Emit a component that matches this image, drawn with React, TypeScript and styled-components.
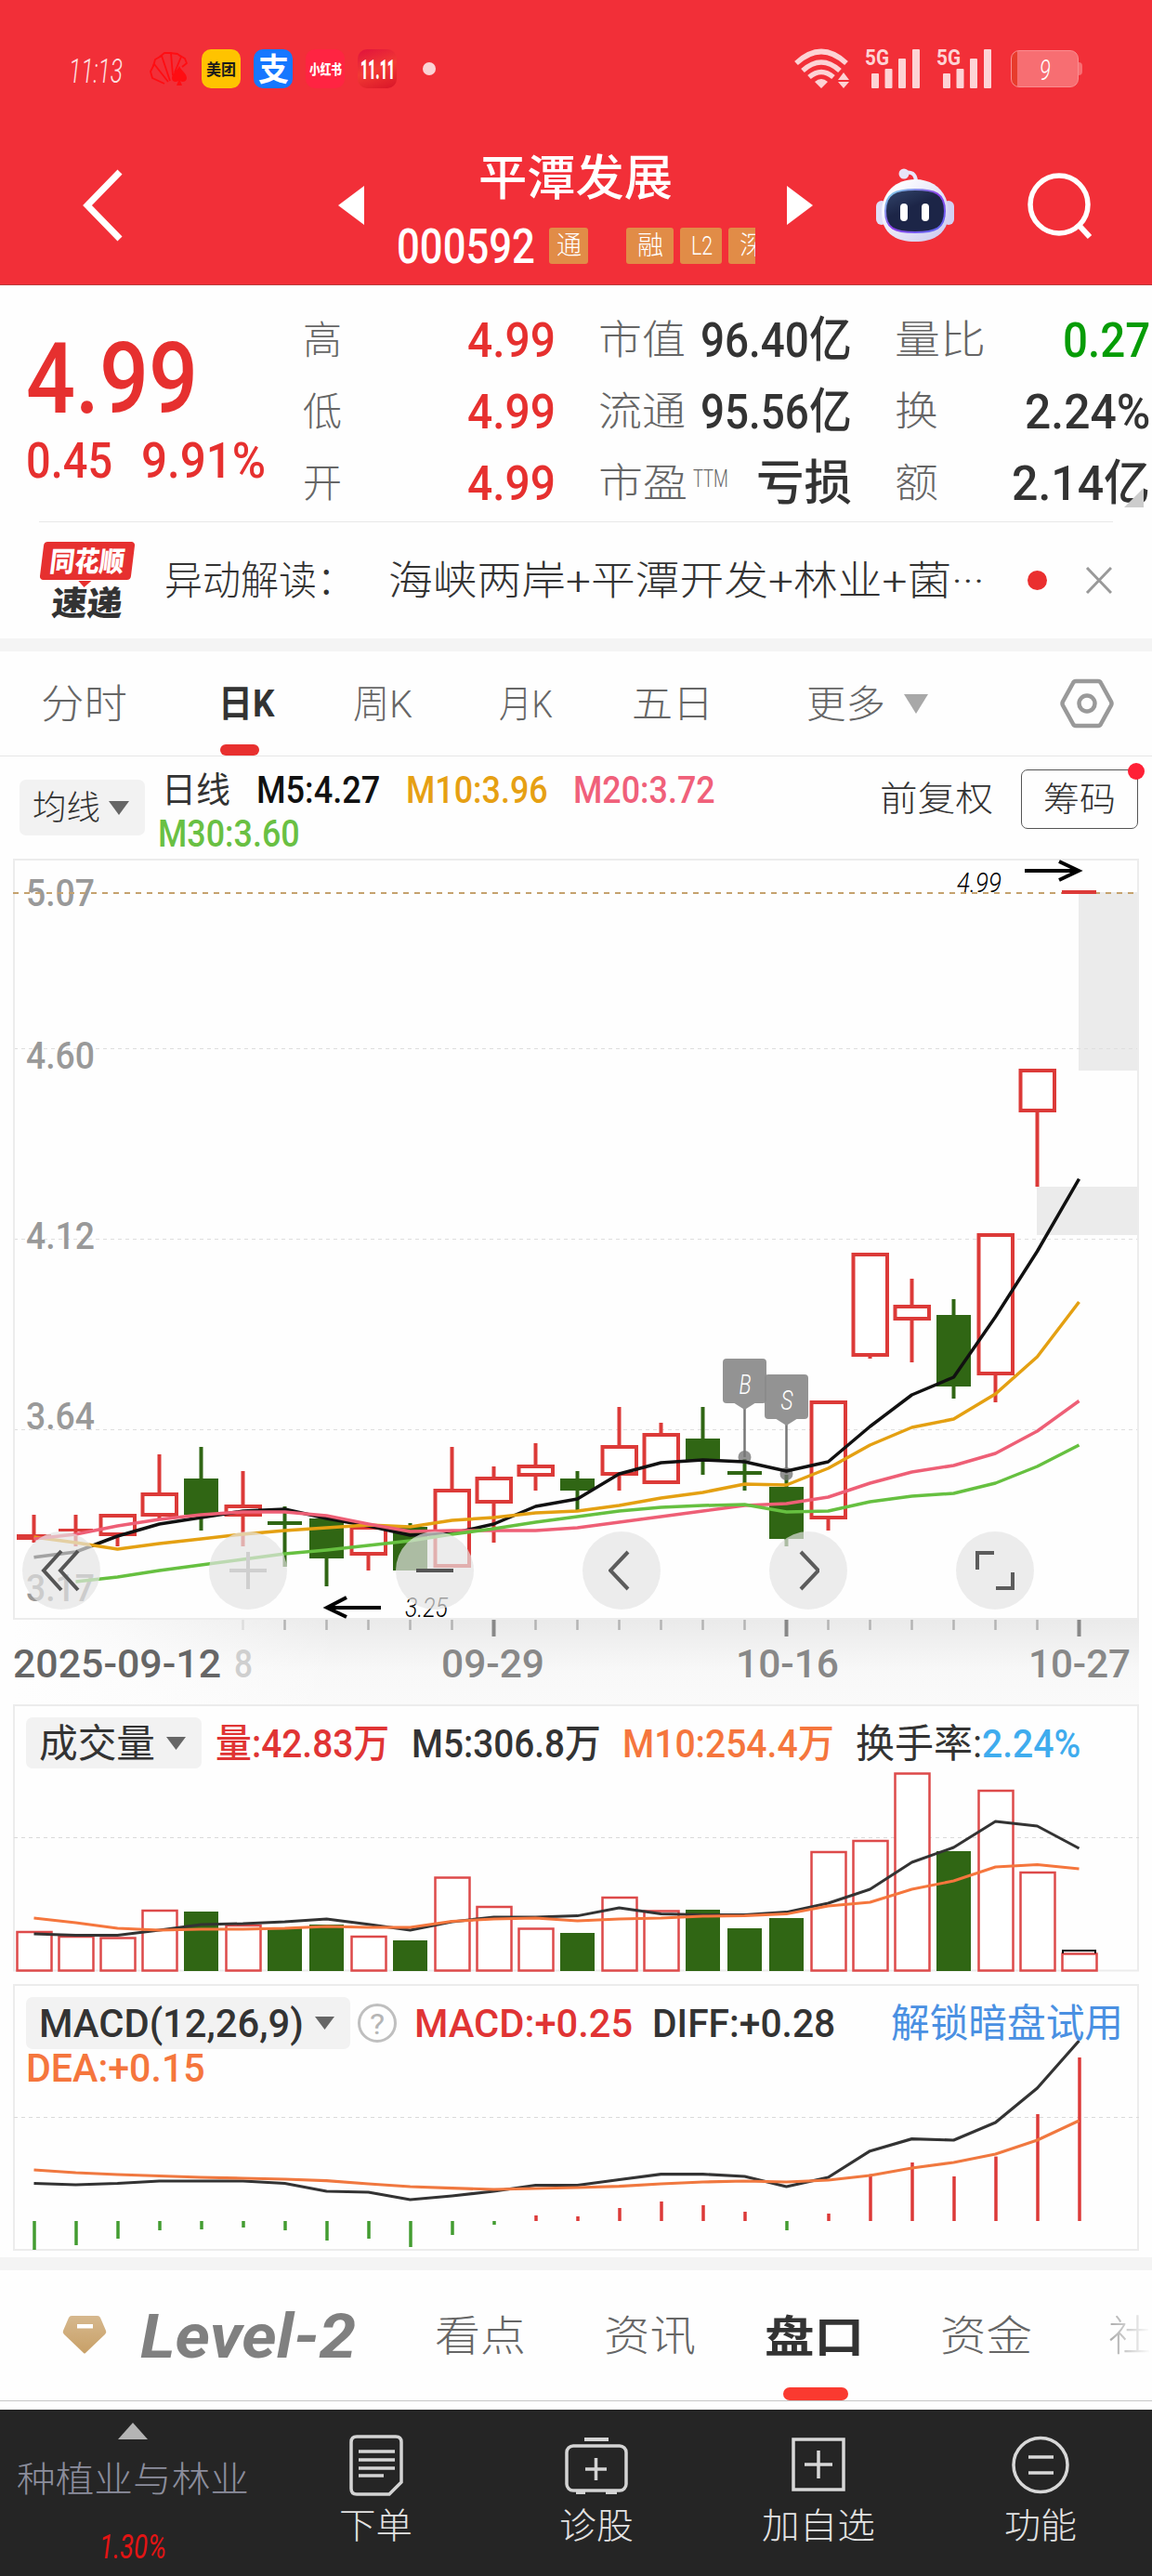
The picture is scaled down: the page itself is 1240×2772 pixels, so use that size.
import React, { useLayoutEffect, useRef, useState } from "react";
import styled, { createGlobalStyle } from "styled-components";

const FONT = `Roboto, "Noto Sans CJK SC", sans-serif`;
const RED = "#e6302f";
const INK = "#333333";
const UP = "#dc3a38";
const DOWN = "#306614";

const Global = createGlobalStyle`
  html, body { margin: 0; padding: 0; background: #fefefe; }
  * { box-sizing: border-box; }
  svg { display: block; flex: none; }
`;

/* ---------- text fitted to a given width ---------- */

const FitBox = styled.span<{ $w: number; $size: number; $color?: string; $weight?: number; $ml?: number; $italic?: boolean; $dy?: number }>`
  display: block;
  flex: none;
  width: ${(p) => p.$w}px;
  height: ${(p) => p.$size}px;
  margin-left: ${(p) => p.$ml ?? 0}px;
  margin-top: ${(p) => p.$dy ?? 0}px;
  font-family: ${FONT};
  font-size: ${(p) => p.$size}px;
  line-height: 1;
  font-weight: ${(p) => p.$weight ?? 500};
  font-style: ${(p) => (p.$italic ? "italic" : "normal")};
  color: ${(p) => p.$color ?? INK};
`;
const FitInner = styled.span`
  display: inline-block;
  white-space: pre;
  transform-origin: 0 50%;
`;

type FitProps = { w: number; size: number; color?: string; weight?: number; ml?: number; italic?: boolean; dy?: number; children: React.ReactNode };
function Fit({ w, size, color, weight, ml, italic, dy, children }: FitProps) {
  const ref = useRef<HTMLSpanElement>(null);
  const [scale, setScale] = useState(1);
  useLayoutEffect(() => {
    if (ref.current && ref.current.offsetWidth) setScale(w / ref.current.offsetWidth);
  }, [w, size]);
  return (
    <FitBox $w={w} $size={size} $color={color} $weight={weight} $ml={ml} $italic={italic} $dy={dy}>
      <FitInner ref={ref} style={{ transform: `translateY(1px) scaleX(${scale})` }}>
        {children}
      </FitInner>
    </FitBox>
  );
}

/* ---------- layout ---------- */

const Page = styled.div`
  width: 1240px;
  height: 2772px;
  display: flex;
  flex-direction: column;
  overflow: hidden;
  background: #fefefe;
  font-family: ${FONT};
`;
const Header = styled.header`
  height: 307px;
  background: #f22f38;
  border-bottom: 1px solid #b93a3c;
`;
const StatusBar = styled.div`
  height: 148px;
  padding: 0 76px;
  display: flex;
  align-items: center;
`;
const AppIcon = styled.span<{ $bg: string }>`
  flex: none;
  width: 42px;
  height: 42px;
  margin-left: 14px;
  border-radius: 10px;
  background: ${(p) => p.$bg};
  display: flex;
  align-items: center;
  justify-content: center;
  overflow: hidden;
`;
const StatusDot = styled.span`
  width: 14px;
  height: 14px;
  margin-left: 28px;
  border-radius: 50%;
  background: #fbd3d5;
`;
const StatusRight = styled.div`
  display: flex;
  align-items: center;
  margin-left: auto;
`;
const Battery = styled.span`
  flex: none;
  width: 73px;
  height: 40px;
  margin-left: 20px;
  border: 1px solid #fa8d90;
  border-radius: 9px;
  background: linear-gradient(90deg, #e73c2c 6px, #f76e72 6px);
  display: flex;
  align-items: center;
  justify-content: center;
`;
const BatteryNub = styled.span`
  width: 4px;
  height: 14px;
  margin-right: -1px;
  border-radius: 0 4px 4px 0;
  background: #f76e72;
`;
const NavBar = styled.div`
  height: 146px;
  display: flex;
  align-items: center;
  padding-left: 88px;
`;
const NavSpace = styled.span<{ $w: number }>`
  flex: none;
  width: ${(p) => p.$w}px;
`;
const TitleStack = styled.div`
  width: 455px;
  height: 146px;
  padding-top: 18px;
  display: flex;
  flex-direction: column;
  align-items: center;
`;
const CodeRow = styled.div`
  width: 386px;
  height: 62px;
  margin: 16px 0 0;
  display: flex;
  align-items: center;
  overflow: hidden;
`;
const Tag = styled.span<{ $w: number; $ml: number }>`
  flex: none;
  width: ${(p) => p.$w}px;
  height: 39px;
  margin-left: ${(p) => p.$ml}px;
  padding-left: 2px;
  border-radius: 3px;
  background: #e18c47;
  display: flex;
  align-items: center;
  justify-content: center;
`;

const Quote = styled.section`
  height: 254px;
  display: flex;
  position: relative;
`;
const PriceBlock = styled.div`
  width: 328px;
  padding: 47px 0 0 28px;
`;
const ChangeRow = styled.div`
  display: flex;
  margin-top: 9px;
`;
const StatColumn = styled.div<{ $w: number; $ml?: number }>`
  width: ${(p) => p.$w}px;
  margin-left: ${(p) => p.$ml ?? 0}px;
  padding-top: 20px;
`;
const StatRow = styled.div`
  height: 77px;
  display: flex;
  align-items: center;
  justify-content: space-between;
`;
const StatLabel = styled.span`
  display: flex;
  align-items: flex-start;
`;
const Corner = styled.i`
  position: absolute;
  right: 9px;
  top: 218px;
  width: 21px;
  height: 21px;
  background: #cccccc;
  clip-path: polygon(100% 0, 100% 100%, 0 100%);
`;
const News = styled.section`
  height: 126px;
  margin: 0 42px;
  border-top: 1px solid #e9e9e9;
  display: flex;
  align-items: center;
`;
const NewsLogo = styled.div`
  width: 104px;
  height: 84px;
  display: flex;
  flex-direction: column;
  align-items: center;
`;
const LogoBubble = styled.div`
  position: relative;
  width: 98px;
  height: 43px;
  border-radius: 4px;
  background: #e6302f;
  transform: skewX(-7deg);
  display: flex;
  align-items: center;
  justify-content: center;
  &::after {
    content: "";
    position: absolute;
    left: 42px;
    top: 42px;
    border: 7px solid transparent;
    border-top-color: #e6302f;
  }
`;
const LogoCaption = styled.div`
  margin-top: 7px;
  transform: skewX(-5deg);
`;
const NewsDot = styled.span`
  width: 21px;
  height: 21px;
  margin-left: 46px;
  border-radius: 50%;
  background: #ea2f2f;
`;
const Band = styled.div`
  flex: none;
  height: 14px;
  background: #f4f4f4;
`;
const PeriodTabs = styled.nav`
  height: 113px;
  border-bottom: 1px solid #e6e6e6;
  display: flex;
  align-items: stretch;
`;
const Tab = styled.div<{ $ml: number }>`
  position: relative;
  display: flex;
  align-items: center;
  margin-left: ${(p) => p.$ml}px;
`;
const TabMark = styled.i<{ $w: number; $h: number; $left: number; $color: string }>`
  position: absolute;
  bottom: 0;
  left: ${(p) => p.$left}px;
  width: ${(p) => p.$w}px;
  height: ${(p) => p.$h}px;
  border-radius: ${(p) => p.$h / 2}px;
  background: ${(p) => p.$color};
`;
const Legend = styled.section`
  height: 110px;
  padding-left: 21px;
  display: flex;
  align-items: flex-start;
`;
const Picker = styled.span<{ $w: number; $h: number; $mt?: number }>`
  flex: none;
  width: ${(p) => p.$w}px;
  height: ${(p) => p.$h}px;
  margin-top: ${(p) => p.$mt ?? 0}px;
  padding: 0 17px 0 14px;
  border-radius: 7px;
  background: #f2f2f2;
  display: flex;
  align-items: center;
  justify-content: space-between;
`;
const LegendLines = styled.div`
  width: 791px;
  padding: 12px 0 0 16px;
`;
const LegendLine = styled.div<{ $h: number }>`
  height: ${(p) => p.$h}px;
  display: flex;
  align-items: center;
`;
const ChipButton = styled.span`
  position: relative;
  flex: none;
  width: 126px;
  height: 64px;
  margin: 14px 0 0 30px;
  border: 1px solid #555;
  border-radius: 7px;
  display: flex;
  align-items: center;
  justify-content: center;
  &::after {
    content: "";
    position: absolute;
    right: -8px;
    top: -8px;
    width: 18px;
    height: 18px;
    border-radius: 50%;
    background: #ff2036;
  }
`;
const KPanel = styled.section`
  position: relative;
  height: 910px;
`;
const ChartSvg = styled.svg`
  font-family: ${FONT};
`;
const Controls = styled.div`
  position: absolute;
  left: 24px;
  top: 724px;
  display: flex;
  gap: 117px;
`;
const RoundButton = styled.button`
  width: 84px;
  height: 84px;
  padding: 0;
  border: 0;
  border-radius: 50%;
  background: rgba(228, 228, 228, 0.69);
  display: flex;
  align-items: center;
  justify-content: center;
`;
const SubPanel = styled.section<{ $h: number; $mb: number }>`
  position: relative;
  flex: none;
  height: ${(p) => p.$h}px;
  margin-bottom: ${(p) => p.$mb}px;
`;
const PanelHead = styled.div`
  position: absolute;
  left: 28px;
  top: 14px;
  right: 0;
  height: 55px;
  display: flex;
  align-items: center;
`;
const PanelSecondLine = styled.div`
  position: absolute;
  left: 28px;
  top: 69px;
`;
const Help = styled.span`
  width: 42px;
  height: 42px;
  margin-left: 8px;
  border: 3px solid #bfbfbf;
  border-radius: 50%;
  display: flex;
  align-items: center;
  justify-content: center;
`;
const DetailTabs = styled.nav`
  height: 141px;
  flex: none;
  border-bottom: 1px solid #c6c6c6;
  margin-bottom: 9px;
  display: flex;
  padding-left: 58px;
  overflow: hidden;
`;
const Faded = styled.div`
  display: flex;
  align-items: center;
  margin-left: 82px;
  -webkit-mask-image: linear-gradient(90deg, #000, transparent);
  mask-image: linear-gradient(90deg, #000, transparent);
`;
const Footer = styled.footer`
  height: 179px;
  background: #252525;
  display: flex;
`;
const Sector = styled.div`
  width: 286px;
  display: flex;
  flex-direction: column;
  align-items: center;
  padding-top: 14px;
`;
const Action = styled.div<{ $w: number }>`
  width: ${(p) => p.$w}px;
  padding-top: 27px;
  display: flex;
  flex-direction: column;
  align-items: center;
  gap: 12px;
`;

/* ---------- icons ---------- */

const Caret = ({ w = 22, h = 15, color = "#666", ml = 0 }: { w?: number; h?: number; color?: string; ml?: number }) => (
  <svg width={w + ml} height={h} viewBox={`${-ml} 0 ${w + ml} ${h}`}>
    <path d={`M0 0H${w}L${w / 2} ${h}Z`} fill={color} />
  </svg>
);

const FanLogo = () => (
  <svg width="42" height="36" viewBox="0 0 42 36">
    <g fill="none" stroke="#ff0d12" strokeWidth="1.8" strokeLinejoin="round">
      <path d="M16 34L3 28 1 21 5 13 20 32" />
      <path d="M4 15L6 8 13 4 22 31" />
      <path d="M11 5L16 1 23 1 25 25" />
      <path d="M22 1L30 2 34 5 27 22" />
      <path d="M33 4L38 7 40 12 35 16" />
    </g>
    <path d="M32 15c2 5 8 8 8 13 0 4-5 5-7 3l2 5h-6l2-5c-3 2-7 1-7-3 0-5 6-8 8-13z" fill="#ff0d12" />
  </svg>
);

const Wifi = () => (
  <svg width="60" height="44" viewBox="0 0 60 44">
    <g fill="none" stroke="#fdd3d5" strokeWidth="5.5">
      <path d="M2 16Q29-9 56 16" />
      <path d="M9 24Q29 6 49 24" />
      <path d="M16 31Q29 20 42 31" />
    </g>
    <path d="M22 36Q29 30 36 36L29 43Z M53 26l6 8H47z M53 43l6-7H47z" fill="#fdd3d5" />
  </svg>
);

const Signal = ({ ml }: { ml: number }) => (
  <svg width={60 + ml} height="56" viewBox={`${-ml} -6 ${60 + ml} 56`}>
    <text x="0" y="18" fontFamily="Roboto, sans-serif" fontSize="24" fontWeight="700" fill="#fdd3d5" textLength="26" lengthAdjust="spacingAndGlyphs">
      5G
    </text>
    <g fill="#fdd3d5">
      <rect x="7" y="27" width="8" height="16" rx="1" />
      <rect x="21.500" y="22" width="8" height="21" rx="1" />
      <rect x="36" y="11" width="8" height="32" rx="1" />
      <rect x="51" y="1" width="8" height="42" rx="1" />
    </g>
  </svg>
);

const Robot = () => (
  <svg width="86" height="82" viewBox="0 0 86 82">
    <defs>
      <linearGradient id="shell" x1="0" y1="0" x2="1" y2="1">
        <stop offset="0.2" stopColor="#fbfbff" />
        <stop offset="1" stopColor="#c9c6ee" />
      </linearGradient>
      <linearGradient id="rim" x1="0" y1="0" x2="1" y2="1">
        <stop offset="0" stopColor="#7fe3ea" />
        <stop offset="0.5" stopColor="#8b3fe8" />
        <stop offset="1" stopColor="#5a6df2" />
      </linearGradient>
      <linearGradient id="visor" x1="0" y1="0" x2="0.6" y2="1">
        <stop offset="0" stopColor="#34466c" />
        <stop offset="0.5" stopColor="#1c2547" />
      </linearGradient>
    </defs>
    <path d="M31 6Q43 3 44 15" fill="none" stroke="#e9e6fa" strokeWidth="4" />
    <circle cx="31" cy="7" r="5.500" fill="#e8e4f8" />
    <rect x="1" y="36" width="12" height="26" rx="6" fill="#e0def6" />
    <rect x="73" y="36" width="12" height="26" rx="6" fill="#d3d0f2" />
    <path d="M43 13C64 13 79 27 79 49 79 70 65 80 43 80S7 70 7 49C7 27 22 13 43 13Z" fill="url(#shell)" />
    <path d="M43 24C64 24 75 28 75 47S65 70 43 70 11 66 11 47 22 24 43 24Z" fill="url(#visor)" stroke="url(#rim)" strokeWidth="2" />
    <rect x="27" y="39" width="8" height="19" rx="4" fill="#fff" />
    <rect x="50" y="39" width="8" height="19" rx="4" fill="#fff" />
  </svg>
);

/* ---------- chart data (26 sessions) ---------- */

const X0 = 36.5;
const STEP = 45;
const xAt = (i: number) => X0 + STEP * i;
const line = (ys: number[], from = 0) => ys.map((y, i) => `${xAt(i + from)},${y}`).join(" ");

type Candle = [up: 0 | 1, bodyTop: number, bodyBottom: number, high: number, low: number];
const candles: Candle[] = [
  [1, 1651, 1657, 1630, 1660], [1, 1645, 1648, 1630, 1664], [1, 1629, 1653, 1629, 1664], [1, 1606, 1632, 1565, 1634],
  [0, 1591, 1630, 1557, 1647], [1, 1619, 1632, 1583, 1664], [0, 1637, 1641, 1621, 1686], [0, 1634, 1677, 1634, 1707],
  [1, 1642, 1674, 1642, 1690], [0, 1643, 1690, 1639, 1690], [1, 1602, 1687, 1557, 1687], [1, 1589, 1618, 1578, 1660],
  [1, 1576, 1589, 1553, 1604], [0, 1591, 1604, 1583, 1626], [1, 1555, 1588, 1514, 1604], [1, 1542, 1597, 1531, 1597],
  [0, 1548, 1573, 1514, 1587], [0, 1583, 1587, 1570, 1604], [0, 1600, 1656, 1587, 1664], [1, 1507, 1635, 1507, 1647],
  [1, 1348, 1460, 1348, 1462], [1, 1404, 1421, 1376, 1466], [0, 1415, 1492, 1398, 1505], [1, 1327, 1480, 1327, 1509],
  [1, 1150, 1197, 1150, 1277], [1, 958, 962, 958, 962],
];
const ma5 = [1675.7, 1670, 1653, 1640, 1633, 1626, 1624, 1634, 1642, 1652, 1650, 1640, 1621, 1613, 1586, 1574, 1571, 1573, 1583, 1573, 1535, 1501, 1482, 1417, 1346.5, 1268.6];
const ma10 = [1654, 1660, 1667, 1661, 1656, 1651, 1647, 1644, 1641, 1643, 1636, 1633, 1628, 1626, 1620, 1612, 1606, 1597, 1598, 1580, 1555, 1536, 1527, 1500, 1460, 1401];
const ma20 = [1656, 1651, 1642, 1635, 1630, 1627, 1627, 1631, 1640, 1648, 1647, 1647, 1647, 1644, 1638, 1632, 1626, 1620, 1618, 1611, 1596, 1584, 1577, 1564, 1540, 1507.5];
const ma30 = [1702, 1697, 1690, 1684, 1678, 1672, 1668, 1663, 1658, 1651, 1645, 1638, 1632, 1626, 1622, 1620, 1619, 1627, 1626, 1616, 1610, 1607, 1596, 1578, 1555];

const volTop = [2079, 2084, 2085.5, 2056, 2057, 2072, 2075, 2071, 2084, 2088, 2020.5, 2052, 2075.5, 2080, 2042, 2056.5, 2055, 2075, 2064, 1993, 1981, 1908.500, 1992, 1927, 2015, 2102.500];
const volDown = [4, 6, 7, 9, 13, 16, 17, 18, 22];
const vol5 = [2081, 2082.5, 2082.5, 2077, 2071, 2070, 2068, 2065, 2070.7, 2077, 2068, 2063, 2063, 2061.6, 2053, 2059.6, 2060.4, 2060.4, 2057.6, 2048, 2033, 2004, 1988, 1960, 1965, 1989];
const vol10 = [2064, 2069, 2075, 2077, 2076, 2076, 2075, 2073, 2074, 2074, 2067.5, 2065, 2064, 2067, 2065, 2064, 2062, 2061.6, 2059.6, 2051, 2047, 2033, 2024, 2009, 2006.6, 2011];

const macdEnd = [2421, 2416, 2409, 2400, 2399, 2397, 2400, 2411, 2409, 2418, 2405, 2394, 2384, 2385, 2376, 2369, 2373, 2380, 2400, 2382, 2339.6, 2327, 2342, 2320.6, 2275, 2214];
const diff = [2349.5, 2351, 2349.5, 2347, 2347, 2347, 2349.5, 2358, 2359, 2367, 2363, 2358, 2351.5, 2351.5, 2345.5, 2339.6, 2339.6, 2342, 2353, 2343, 2314.7, 2301.6, 2303, 2284, 2247, 2196];
const dea = [2335, 2338, 2340, 2341.5, 2343, 2344, 2345, 2346.7, 2350, 2353, 2354.6, 2356, 2355, 2354, 2352.6, 2350, 2348, 2347, 2348, 2346, 2341, 2333, 2327, 2318, 2303, 2282];

const priceLabels: [string, number][] = [["5.07", 975], ["4.60", 1150], ["4.12", 1344], ["3.64", 1538], ["3.17", 1723]];
const dateLabels: [string, number, number, string][] = [
  ["2025-09-12", 14, 224, "#666"], ["8", 252, 20, "#cfcfcf"], ["09-29", 475, 111, "#888"], ["10-16", 792, 111, "#888"], ["10-27", 1107, 110, "#888"],
];

function CandleShape({ i, c }: { i: number; c: Candle }) {
  const [up, top, bottom, high, low] = c;
  const x = xAt(i);
  const solid = !up || bottom - top < 8;
  const color = up ? UP : DOWN;
  return (
    <g>
      {high < top && <path d={`M${x} ${high}V${top + 1}`} stroke={color} strokeWidth="4" />}
      {low > bottom && <path d={`M${x} ${bottom - 1}V${low}`} stroke={color} strokeWidth="4" />}
      {solid ? (
        <rect x={x - 18.5} y={top} width="37" height={bottom - top} fill={color} />
      ) : (
        <rect x={x - 18} y={top + 2} width="36.500" height={bottom - top - 4} fill="#fff" stroke={color} strokeWidth="4" />
      )}
    </g>
  );
}

const Flag = ({ x, y, end, label }: { x: number; y: number; end: number; label: string }) => (
  <g>
    <path d={`M${x} ${y + 50}V${end}`} stroke="#777" strokeWidth="2.500" />
    <circle cx={x} cy={end} r="7" fill="#777" fillOpacity="0.8" />
    <rect x={x - 23.5} y={y} width="47" height="48" rx="4" fill="#8a8a8a" fillOpacity="0.92" />
    <path d={`M${x - 11} ${y + 48}h22l-11 7z`} fill="#939393" />
    <text x={x - 6} y={y + 38} fontSize="30" fontWeight="300" fontStyle="italic" fill="#fff" textLength="13" lengthAdjust="spacingAndGlyphs">
      {label}
    </text>
  </g>
);

function KChart() {
  return (
    <ChartSvg width="1240" height="910" viewBox="0 924 1240 910">
      <defs>
        <linearGradient id="axisV" x1="0" y1="0" x2="0" y2="1">
          <stop offset="0" stopColor="#eaeaea" />
          <stop offset="0.6" stopColor="#f8f8f8" />
          <stop offset="1" stopColor="#fafafa" />
        </linearGradient>
        <linearGradient id="axisH" x1="0" y1="0" x2="1" y2="0">
          <stop offset="0" stopColor="#fefefe" />
          <stop offset="0.15" stopColor="#fefefe" stopOpacity="0.75" />
          <stop offset="0.5" stopColor="#fefefe" stopOpacity="0" />
        </linearGradient>
      </defs>
      <rect x="15" y="1743" width="1211" height="91" fill="url(#axisV)" />
      <rect x="15" y="1743" width="700" height="91" fill="url(#axisH)" />
      <path d="M1161 960h65v192h-65zM1116 1277h110v52h-110z" fill="#ebebeb" />
      <path d="M15 1128.500H1226M15 1333.500H1226M15 1538.500H1226" stroke="#dedede" strokeWidth="1" strokeDasharray="4 4" />
      <rect x="15" y="925" width="1210" height="817" fill="none" stroke="#ececec" strokeWidth="2" />
      {priceLabels.map(([t, y]) => (
        <text key={t} x="28" y={y} fontSize="41" fontWeight="500" fill="#999" textLength="74" lengthAdjust="spacingAndGlyphs">
          {t}
        </text>
      ))}
      <path d="M14 961H1226" stroke="#c5a26e" strokeWidth="2" strokeDasharray="6 6" />
      {candles.map((c, i) => (
        <CandleShape key={i} i={i} c={c} />
      ))}
      <Flag x={801.5} y={1462} end={1568} label="B" />
      <Flag x={846.5} y={1479} end={1586} label="S" />
      <g fill="none" strokeWidth="3.500" strokeLinejoin="round">
        <polyline points={line(ma5)} stroke="#111" />
        <polyline points={line(ma10)} stroke="#e4a012" />
        <polyline points={line(ma20)} stroke="#ee5f76" />
        <polyline points={line(ma30, 1)} stroke="#66c040" />
      </g>
      <g fill="none" stroke="#000" strokeWidth="4">
        <path d="M1103 937h58M1140 927l21 10-21 10" />
        <path d="M410 1730h-58M373 1719l-21 11 21 10" />
      </g>
      <text x="1030" y="960" fontSize="30" fontStyle="italic" fontWeight="300" fill="#000" textLength="48" lengthAdjust="spacingAndGlyphs">4.99</text>
      <text x="436" y="1740" fontSize="30" fontStyle="italic" fontWeight="300" fill="#000" textLength="46" lengthAdjust="spacingAndGlyphs">3.25</text>
      {Array.from({ length: 21 }, (_, k) => k + 5).map((i) => {
        const major = i === 11 || i === 18 || i === 25;
        return <path key={i} d={`M${xAt(i)} 1743v${major ? 18 : 11}`} stroke={major ? "#888" : i === 5 ? "#ddd" : "#b4b4b4"} strokeWidth={major ? 4 : 2.5} />;
      })}
      {dateLabels.map(([t, x, w, color]) => (
        <text key={t} x={x} y="1805" fontSize="42" fontWeight="500" fill={color} textLength={w} lengthAdjust="spacingAndGlyphs">
          {t}
        </text>
      ))}
    </ChartSvg>
  );
}

function VolumeChart() {
  return (
    <ChartSvg width="1240" height="288" viewBox="0 1834 1240 288">
      <rect x="15" y="1835" width="1210" height="285.500" fill="none" stroke="#ececec" strokeWidth="2" />
      <path d="M15 1977.500H1226" stroke="#dadada" strokeWidth="1" strokeDasharray="4 4" />
      {volTop.map((y, i) =>
        volDown.includes(i) ? (
          <rect key={i} x={xAt(i) - 18.5} y={y} width="37" height={2121 - y} fill={DOWN} />
        ) : (
          <rect key={i} x={xAt(i) - 18} y={y} width="37" height={2120.5 - y} fill="#fff" stroke="#dd4a4a" strokeWidth="2.500" />
        )
      )}
      <path d="M1144 2102v-3h35v3" fill="none" stroke="#000" strokeWidth="2" />
      <g fill="none" strokeWidth="3" strokeLinejoin="round">
        <polyline points={line(vol5)} stroke="#333" />
        <polyline points={line(vol10)} stroke="#f5763d" />
      </g>
    </ChartSvg>
  );
}

function MacdChart() {
  return (
    <ChartSvg width="1240" height="287" viewBox="0 2135 1240 287">
      <rect x="15" y="2136" width="1210" height="285" fill="none" stroke="#ececec" strokeWidth="2" />
      <path d="M15 2278.500H1226" stroke="#dadada" strokeWidth="1" strokeDasharray="4 4" />
      {macdEnd.map((y, i) => (
        <path key={i} d={`M${xAt(i) + 0.5} 2390V${y}`} stroke={y > 2390 ? "#439c31" : "#dc3a38"} strokeWidth="3.500" />
      ))}
      <g fill="none" strokeWidth="3.200" strokeLinejoin="round">
        <polyline points={line(diff)} stroke="#333" />
        <polyline points={line(dea)} stroke="#f0783f" />
      </g>
    </ChartSvg>
  );
}

/* ---------- page ---------- */

const GREY = "#666";

export default function App() {
  return (
    <Page>
      <Global />
      <Header>
        <StatusBar>
          <Fit w={58} size={36} weight={300} italic color="#fde0e1" dy={4} ml={-2}>11:13</Fit>
          <NavSpace $w={29} />
          <FanLogo />
          <AppIcon $bg="#ffc300"><Fit w={32} size={17} weight={700} color="#1b1b1b">美团</Fit></AppIcon>
          <AppIcon $bg="#1677ff"><Fit w={33} size={34} weight={700} color="#fff">支</Fit></AppIcon>
          <AppIcon $bg="#ff2442"><Fit w={35} size={15} weight={800} color="#fff">小红书</Fit></AppIcon>
          <AppIcon $bg="linear-gradient(160deg,#e0123c,#f23a34 50%,#d81428)"><Fit w={37} size={29} weight={900} color="#fff">11.11</Fit></AppIcon>
          <StatusDot />
          <StatusRight>
            <Wifi />
            <Signal ml={16} />
            <Signal ml={17} />
            <Battery><Fit w={12} size={31} weight={300} italic color="#fff">9</Fit></Battery>
            <BatteryNub />
          </StatusRight>
        </StatusBar>
        <NavBar>
          <svg width="44" height="78" viewBox="0 0 44 78"><path d="M41 3L6 39 41 75" fill="none" stroke="#fff" strokeWidth="7" /></svg>
          <NavSpace $w={232} />
          <svg width="28" height="42" viewBox="0 0 28 42"><path d="M28 0v42L0 21z" fill="#fff" /></svg>
          <TitleStack>
            <Fit w={209} size={52} color="#fff">平潭发展</Fit>
            <CodeRow>
              <Fit w={149} size={51} color="#fff">000592</Fit>
              <Tag $w={42} $ml={15}><Fit w={27} size={28} weight={300} color="#fff">通</Fit></Tag>
              <Tag $w={51} $ml={41}><Fit w={28} size={28} weight={300} color="#fff">融</Fit></Tag>
              <Tag $w={45} $ml={7}><Fit w={23} size={27} weight={300} color="#fff">L2</Fit></Tag>
              <Tag $w={51} $ml={7}><Fit w={28} size={28} weight={300} color="#fff">深</Fit></Tag>
            </CodeRow>
          </TitleStack>
          <svg width="28" height="42" viewBox="0 0 28 42"><path d="M0 0v42l28-21z" fill="#fff" /></svg>
          <NavSpace $w={67} />
          <Robot />
          <NavSpace $w={77} />
          <svg width="74" height="74" viewBox="0 0 74 74" fill="none" stroke="#fff"><circle cx="35" cy="36" r="31" strokeWidth="5.500" /><path d="M56 58l12 13" strokeWidth="6" /></svg>
        </NavBar>
      </Header>

      <Quote>
        <PriceBlock>
          <Fit w={185} size={106} color={RED}>4.99</Fit>
          <ChangeRow>
            <Fit w={93} size={53} color={RED}>0.45</Fit>
            <Fit w={134} size={53} color={RED} ml={31}>9.91%</Fit>
          </ChangeRow>
        </PriceBlock>
        <StatColumn $w={270}>
          {["高", "低", "开"].map((t) => (
            <StatRow key={t}>
              <Fit w={42} size={42} weight={300} color={GREY} ml={-2}>{t}</Fit>
              <Fit w={95} size={52} color={RED}>4.99</Fit>
            </StatRow>
          ))}
        </StatColumn>
        <StatColumn $w={273} $ml={46}>
          <StatRow><Fit w={94} size={43} weight={300} color={GREY}>市值</Fit><Fit w={163} size={52}>96.40亿</Fit></StatRow>
          <StatRow><Fit w={94} size={43} weight={300} color={GREY}>流通</Fit><Fit w={163} size={52}>95.56亿</Fit></StatRow>
          <StatRow>
            <StatLabel><Fit w={96} size={43} weight={300} color={GREY}>市盈</Fit><Fit w={38} size={25} weight={300} color={GREY} ml={6} dy={4}>TTM</Fit></StatLabel>
            <Fit w={103} size={52}>亏损</Fit>
          </StatRow>
        </StatColumn>
        <StatColumn $w={275} $ml={46}>
          <StatRow><Fit w={98} size={43} weight={300} color={GREY}>量比</Fit><Fit w={94} size={52} color="#069c06">0.27</Fit></StatRow>
          <StatRow><Fit w={47} size={43} weight={300} color={GREY}>换</Fit><Fit w={135} size={52}>2.24%</Fit></StatRow>
          <StatRow><Fit w={47} size={43} weight={300} color={GREY}>额</Fit><Fit w={149} size={52}>2.14亿</Fit></StatRow>
        </StatColumn>
        <Corner />
      </Quote>

      <News>
        <NewsLogo>
          <LogoBubble><Fit w={80} size={30} weight={900} color="#fff">同花顺</Fit></LogoBubble>
          <LogoCaption><Fit w={76} size={36} weight={900} color="#333">速递</Fit></LogoCaption>
        </NewsLogo>
        <Fit w={205} size={43} weight={300} ml={31} dy={0}>异动解读：</Fit>
        <Fit w={642} size={43} weight={300} ml={36} dy={0}>海峡两岸+平潭开发+林业+菌···</Fit>
        <NewsDot />
        <svg width="70" height="30" viewBox="-42 0 70 30"><path d="M1 1l26 27M27 1L1 28" stroke="#999" strokeWidth="3" /></svg>
      </News>
      <Band />

      <PeriodTabs>
        <Tab $ml={44}><Fit w={93} size={43} weight={300} color={GREY}>分时</Fit></Tab>
        <Tab $ml={98}>
          <Fit w={60} size={40} weight={700} color="#333">日K</Fit>
          <TabMark $w={42} $h={12} $left={2} $color="#e8302f" />
        </Tab>
        <Tab $ml={85}><Fit w={64} size={41} weight={300} color={GREY}>周K</Fit></Tab>
        <Tab $ml={93}><Fit w={58} size={41} weight={300} color={GREY}>月K</Fit></Tab>
        <Tab $ml={85}><Fit w={88} size={41} weight={300} color={GREY}>五日</Fit></Tab>
        <Tab $ml={100}><Fit w={85} size={41} weight={300} color={GREY}>更多</Fit><Caret w={26} h={21} color="#a8a8a8" ml={20} /></Tab>
        <Tab $ml={142}>
          <svg width="58" height="54" viewBox="0 0 58 54" fill="none" stroke="#999"><path d="M17 3h24q2 0 3 2l11 20q1 2 0 4L44 49q-1 2-3 2H17q-2 0-3-2L3 29q-1-2 0-4L14 5q1-2 3-2z" strokeWidth="4.500" /><circle cx="29" cy="27" r="8.500" strokeWidth="4.500" /></svg>
        </Tab>
      </PeriodTabs>

      <Legend>
        <Picker $w={135} $h={60} $mt={25}><Fit w={73} size={36} weight={300}>均线</Fit><Caret /></Picker>
        <LegendLines>
          <LegendLine $h={46}>
            <Fit w={74} size={38} ml={2} weight={400}>日线</Fit>
            <Fit w={133} size={41} ml={28} color="#111">M5:4.27</Fit>
            <Fit w={153} size={41} ml={28} color="#e6a013">M10:3.96</Fit>
            <Fit w={153} size={41} ml={27} color="#f0607a">M20:3.72</Fit>
          </LegendLine>
          <LegendLine $h={48}><Fit w={153} size={41} color="#69c043" ml={-2}>M30:3.60</Fit></LegendLine>
        </LegendLines>
        <Fit w={122} size={37} weight={300} dy={27}>前复权</Fit>
        <ChipButton><Fit w={78} size={36} weight={300}>筹码</Fit></ChipButton>
      </Legend>

      <KPanel>
        <KChart />
        <Controls>
          <RoundButton><svg width="44" height="50" viewBox="0 0 44 50" fill="none" stroke="#555" strokeWidth="4"><path d="M22 4L3 25 22 46M40 4L21 25 40 46" /></svg></RoundButton>
          <RoundButton><svg width="40" height="40" viewBox="0 0 40 40" stroke="#cfcfcf" strokeWidth="4"><path d="M0 20h40M20 0v40" /></svg></RoundButton>
          <RoundButton><svg width="40" height="4" viewBox="0 0 40 4"><path d="M0 2h40" stroke="#555" strokeWidth="4" /></svg></RoundButton>
          <RoundButton><svg width="28" height="44" viewBox="0 0 28 44" fill="none" stroke="#5c5c5c" strokeWidth="4"><path d="M21 2L2 22 21 42" /></svg></RoundButton>
          <RoundButton><svg width="24" height="44" viewBox="0 0 24 44" fill="none" stroke="#5c5c5c" strokeWidth="4"><path d="M4 2l19 20L4 42" /></svg></RoundButton>
          <RoundButton><svg width="44" height="44" viewBox="0 0 44 44" fill="none" stroke="#5c5c5c" strokeWidth="4"><path d="M3 21V3h18M23 41h18V24" /></svg></RoundButton>
        </Controls>
      </KPanel>

      <SubPanel $h={288} $mb={13}>
        <VolumeChart />
        <PanelHead>
          <Picker $w={189} $h={55}><Fit w={125} size={42} weight={400}>成交量</Fit><Caret w={21} h={14} /></Picker>
          <Fit w={187} size={42} color="#e03434" ml={15}>量:42.83万</Fit>
          <Fit w={204} size={42} ml={24}>M5:306.8万</Fit>
          <Fit w={228} size={42} color="#f5763d" ml={23}>M10:254.4万</Fit>
          <Fit w={136} size={42} ml={23} weight={400}>换手率:</Fit>
          <Fit w={106} size={42} color="#3facee">2.24%</Fit>
        </PanelHead>
      </SubPanel>

      <SubPanel $h={287} $mb={7}>
        <MacdChart />
        <PanelHead>
          <Picker $w={349} $h={56}><Fit w={285} size={42}>MACD(12,26,9)</Fit><Caret w={21} h={14} /></Picker>
          <Help><Fit w={16} size={32} weight={400} color="#b5b5b5">?</Fit></Help>
          <Fit w={235} size={42} color="#e03434" ml={19}>MACD:+0.25</Fit>
          <Fit w={197} size={42} ml={21}>DIFF:+0.28</Fit>
          <Fit w={250} size={42} color="#4a90e2" weight={400} ml={60}>解锁暗盘试用</Fit>
        </PanelHead>
        <PanelSecondLine><Fit w={193} size={42} color="#f5763d">DEA:+0.15</Fit></PanelSecondLine>
      </SubPanel>
      <Band />

      <DetailTabs>
        <Tab $ml={9}>
          <svg width="48" height="50" viewBox="0 0 48 50">
            <defs><linearGradient id="gem" x1="0" y1="0" x2="0" y2="1"><stop stopColor="#d6b88e" /><stop offset="1" stopColor="#c8a067" /></linearGradient></defs>
            <path d="M10 4h28q2 0 3 2l6 14q1 2-1 4L25 44q-1 1-2 0L2 24q-2-2-1-4L7 6q1-2 3-2z" fill="url(#gem)" />
            <rect x="16" y="13" width="17" height="4.500" fill="#fff" />
          </svg>
        </Tab>
        <Tab $ml={36}><Fit w={233} size={67} weight={700} italic color="#808080">Level-2</Fit></Tab>
        <Tab $ml={84}><Fit w={98} size={45} weight={300} color={GREY}>看点</Fit></Tab>
        <Tab $ml={84}><Fit w={99} size={45} weight={300} color={GREY}>资讯</Fit></Tab>
        <Tab $ml={74}>
          <Fit w={107} size={47} weight={700}>盘口</Fit>
          <TabMark $w={70} $h={14} $left={20} $color="#fa3a30" />
        </Tab>
        <Tab $ml={82}><Fit w={99} size={45} weight={300} color={GREY}>资金</Fit></Tab>
        <Faded><Fit w={46} size={45} weight={300} color="#aaa">社</Fit></Faded>
      </DetailTabs>

      <Footer>
        <Sector>
          <svg width="32" height="18" viewBox="0 0 32 18"><path d="M16 0l16 18H0z" fill="#b4b4b4" /></svg>
          <Fit w={250} size={38} weight={300} color="#8b8d9c" dy={23}>种植业与林业</Fit>
          <Fit w={72} size={36} weight={400} italic color="#e31414" dy={36}>1.30%</Fit>
        </Sector>
        <Action $w={237}>
          <svg width="58" height="66" viewBox="0 0 58 66" fill="none" stroke="#d4d4d4" strokeWidth="3.500"><path d="M8 2h42q6 0 6 6v43L43 64H8q-6 0-6-6V8q0-6 6-6z" /><path d="M10 18h39M10 27h39M10 36h39M10 44h27" /></svg>
          <Fit w={79} size={38} weight={300} color="#e2e2e2">下单</Fit>
        </Action>
        <Action $w={237}>
          <svg width="68" height="66" viewBox="0 0 68 66" fill="none" stroke="#d4d4d4" strokeWidth="4"><path d="M21 5h26" /><rect x="2" y="12" width="64" height="48" rx="7" strokeWidth="3.500" /><path d="M22 37h23M33.500 25v24" strokeWidth="3.500" /><path d="M12 62h10M44 62h12" /></svg>
          <Fit w={80} size={38} weight={300} color="#e2e2e2">诊股</Fit>
        </Action>
        <Action $w={241}>
          <svg width="58" height="66" viewBox="0 0 58 66" fill="none" stroke="#d8d8d8" strokeWidth="3.500"><rect x="2" y="5" width="54" height="54" /><path d="M14 32h30M29 17v30" /></svg>
          <Fit w={122} size={38} weight={300} color="#e2e2e2">加自选</Fit>
        </Action>
        <Action $w={238}>
          <svg width="62" height="66" viewBox="0 0 62 66" fill="none" stroke="#d8d8d8" strokeWidth="3.500"><circle cx="31" cy="32.500" r="29" /><path d="M18 24h27M18 41h27" /></svg>
          <Fit w={78} size={38} weight={300} color="#e2e2e2">功能</Fit>
        </Action>
      </Footer>
    </Page>
  );
}
